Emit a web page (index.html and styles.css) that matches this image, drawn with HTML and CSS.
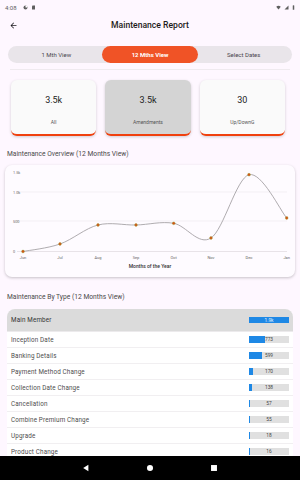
FILE: index.html
```html
<!DOCTYPE html>
<html>
<head>
<meta charset="utf-8">
<link rel="stylesheet" href="styles.css">
</head>
<body>
<div class="screen">
  <div class="status">
    <div class="status-left">
      <span class="time">4:08</span>
      <svg class="sicon" viewBox="0 0 10 10"><circle cx="5" cy="5" r="4" fill="#5f5f5f"/><path d="M5 1 A4 4 0 0 1 9 5 L5 5 Z" fill="#fff"/></svg>
      <svg class="sicon" viewBox="0 0 10 10"><path d="M3 1 H8 V9 H2 V2.5 Z" fill="#5f5f5f"/></svg>
    </div>
    <div class="status-right">
      <svg class="sicon" viewBox="0 0 10 10"><path d="M0.5 3.5 A7 7 0 0 1 9.5 3.5 L5 9 Z" fill="#5f5f5f"/></svg>
      <svg class="sicon" viewBox="0 0 10 10"><path d="M9 1 V9 H1 Z" fill="#5f5f5f"/></svg>
      <svg class="sicon bat" viewBox="0 0 6 10"><rect x="1.5" y="1" width="3" height="8.5" rx="0.5" fill="#5f5f5f"/><rect x="2.3" y="0.3" width="1.4" height="1" fill="#5f5f5f"/></svg>
    </div>
  </div>

  <div class="appbar">
    <svg class="back" viewBox="0 0 24 24"><path d="M20 11H7.83l5.59-5.59L12 4l-8 8 8 8 1.41-1.41L7.83 13H20v-2z" fill="#1d1b20"/></svg>
    <div class="title">Maintenance Report</div>
    <div></div>
  </div>

  <main class="content">
    <div class="tabs">
      <div class="tab">1 Mth View</div>
      <div class="tab active">12 Mths View</div>
      <div class="tab">Select Dates</div>
    </div>
    <div class="divider"></div>

    <div class="cards">
      <div class="card"><div class="val">3.5k</div><div class="lbl">All</div></div>
      <div class="card selected"><div class="val">3.5k</div><div class="lbl">Amendments</div></div>
      <div class="card"><div class="val">30</div><div class="lbl">Up/DownG</div></div>
    </div>

    <div class="section-title">Maintenance Overview (12 Months View)</div>
    <div class="chart-card">
      <svg class="chart" viewBox="0 0 290 112" width="290" height="112">
        <g class="grid">
          <line x1="12" y1="27" x2="282" y2="27"/>
          <line x1="12" y1="56" x2="282" y2="56"/>
        </g>
        <line x1="12" y1="86.5" x2="282" y2="86.5" class="base"/>
        <g class="ylab">
          <text x="8" y="8.5">1.5k</text>
          <text x="8" y="28.5">1.0k</text>
          <text x="8" y="57.5">500</text>
          <text x="8" y="88">0</text>
        </g>
        <path class="line" d="M18 86.5 C24.2 85.25 42.5 83.4 55 79 C67.5 74.6 80.3 63.2 93 60 C105.7 56.8 118.4 60.3 131 60 C143.6 59.7 156.2 56.1 168.7 58.3 C181.2 60.5 193.45 81.1 206 73 C218.55 64.9 231.4 13 244 9.7 C256.6 6.4 275.4 45.8 281.7 53"/>
        <g class="pts">
          <circle cx="18" cy="86.5" r="1.4"/>
          <circle cx="55" cy="79" r="1.4"/>
          <circle cx="93" cy="60" r="1.4"/>
          <circle cx="131" cy="60" r="1.4"/>
          <circle cx="168.7" cy="58.3" r="1.4"/>
          <circle cx="206" cy="73" r="1.4"/>
          <circle cx="244" cy="9.7" r="1.4"/>
          <circle cx="281.7" cy="53" r="1.4"/>
        </g>
        <g class="xlab">
          <text x="18" y="93.5">Jun</text>
          <text x="55" y="93.5">Jul</text>
          <text x="93" y="93.5">Aug</text>
          <text x="131" y="93.5">Sep</text>
          <text x="168.7" y="93.5">Oct</text>
          <text x="206" y="93.5">Nov</text>
          <text x="244" y="93.5">Dec</text>
          <text x="281.7" y="93.5">Jan</text>
        </g>
        <text class="xtitle" x="145" y="103">Months of the Year</text>
      </svg>
    </div>

    <div class="section-title second">Maintenance By Type (12 Months View)</div>
    <div class="table-card">
      <div class="row head">
        <span class="name">Main Member</span>
        <span class="bar"><span class="fill" style="width:100%"></span><span class="num light">1.9k</span></span>
      </div>
      <div class="row"><span class="name">Inception Date</span><span class="bar"><span class="fill" style="width:41%"></span><span class="num">773</span></span></div>
      <div class="row"><span class="name">Banking Details</span><span class="bar"><span class="fill" style="width:32%"></span><span class="num">599</span></span></div>
      <div class="row"><span class="name">Payment Method Change</span><span class="bar"><span class="fill" style="width:9%"></span><span class="num">170</span></span></div>
      <div class="row"><span class="name">Collection Date Change</span><span class="bar"><span class="fill" style="width:7%"></span><span class="num">138</span></span></div>
      <div class="row"><span class="name">Cancellation</span><span class="bar"><span class="fill" style="width:3%"></span><span class="num">57</span></span></div>
      <div class="row"><span class="name">Combine Premium Change</span><span class="bar"><span class="fill" style="width:3%"></span><span class="num">55</span></span></div>
      <div class="row"><span class="name">Upgrade</span><span class="bar"><span class="fill" style="width:1%"></span><span class="num">18</span></span></div>
      <div class="row"><span class="name">Product Change</span><span class="bar"><span class="fill" style="width:1%"></span><span class="num">16</span></span></div>
    </div>
  </main>

  <div class="navbar">
    <svg class="nav-ic" viewBox="0 0 10 10"><path d="M8 1 V9 L1.5 5 Z" fill="#fff"/></svg>
    <svg class="nav-ic" viewBox="0 0 10 10"><circle cx="5" cy="5" r="3.8" fill="#fff"/></svg>
    <svg class="nav-ic" viewBox="0 0 10 10"><rect x="1.3" y="1.3" width="7.4" height="7.4" fill="#fff"/></svg>
  </div>
</div>
</body>
</html>
```

FILE: styles.css
```css
* { box-sizing: border-box; }
html, body { margin: 0; padding: 0; }
body {
  width: 300px;
  height: 480px;
  overflow: hidden;
  background: #fef7ff;
  font-family: Roboto, "Noto Sans", sans-serif;
  color: #1d1b20;
}
.screen {
  width: 300px;
  height: 480px;
  display: flex;
  flex-direction: column;
}
.status {
  height: 14px;
  flex: none;
  display: flex;
  justify-content: space-between;
  align-items: center;
  padding: 0 5px 0 5px;
}
.status-left, .status-right { display: flex; align-items: center; gap: 3px; }
.time { font-size: 6px; color: #5f5f5f; margin-right: 3px; }
.sicon { width: 5px; height: 5px; display: block; }
.sicon.bat { width: 3px; height: 5px; }

.appbar {
  height: 22px;
  flex: none;
  display: grid;
  grid-template-columns: 28px 1fr 28px;
  align-items: center;
}
.back { width: 9px; height: 9px; margin-left: 9px; display: block; }
.title { text-align: center; font-size: 8.6px; font-weight: 500; color: #1d1b20; }

.content {
  flex: 1;
  overflow: hidden;
  display: flex;
  flex-direction: column;
}
.tabs {
  margin: 10px 8px 0;
  height: 17px;
  background: #e9e5ea;
  border-radius: 9px;
  display: flex;
  flex: none;
}
.tab {
  flex: 1;
  display: flex;
  align-items: center;
  justify-content: center;
  font-size: 6px;
  color: #49454f;
}
.tab.active {
  background: #f05326;
  color: #fff;
  font-weight: 700;
  border-radius: 9px;
  margin: 0 -3px 0 -3px;
  position: relative;
}
.divider {
  height: 1px;
  background: #efeaef;
  margin: 6px 10px 0;
  flex: none;
}
.cards {
  display: grid;
  grid-template-columns: repeat(3, 1fr);
  gap: 9px;
  margin: 10px 15px 0 11px;
  flex: none;
}
.card {
  height: 56px;
  background: #fafafa;
  border-radius: 6px;
  border-bottom: 2.5px solid #f0400e;
  box-shadow: 0 1px 3px rgba(0,0,0,0.18);
  display: flex;
  flex-direction: column;
  align-items: center;
}
.card.selected { background: #d4d4d4; }
.val { font-size: 9px; margin-top: 15px; color: #222; }
.lbl { font-size: 5px; margin-top: 14px; color: #555; }

.section-title {
  font-size: 6.7px;
  color: #4a4a4a;
  margin: 13px 0 0 7px;
  height: 10px;
  line-height: 10px;
  flex: none;
}
.section-title.second { margin-top: 15px; }

.chart-card {
  margin: 6px 5px 0;
  height: 112px;
  background: #fefbff;
  border-radius: 7px;
  box-shadow: 0 1px 3px rgba(0,0,0,0.22);
  flex: none;
  overflow: hidden;
}
.chart { display: block; }
.grid line { stroke: #ece8ec; stroke-width: 0.6; }
.base { stroke: #d8d4d8; stroke-width: 0.6; }
.ylab text { font-size: 3.8px; fill: #666; font-family: Roboto, sans-serif; }
.xlab text { font-size: 4px; fill: #666; text-anchor: middle; font-family: Roboto, sans-serif; }
.xtitle { font-size: 5px; fill: #333; text-anchor: middle; font-family: Roboto, sans-serif; font-weight: 500; }
.line { fill: none; stroke: #a6a3a6; stroke-width: 0.9; }
.pts circle { fill: #d84c15; stroke: #8db33a; stroke-width: 0.4; }

.table-card {
  margin: 7px 7px 0;
  background: #fff;
  border-radius: 8px 8px 0 0;
  flex: none;
}
.row {
  height: 16px;
  display: flex;
  align-items: center;
  justify-content: space-between;
  padding: 0 4px 0 4px;
  border-bottom: 1px solid #f1eff1;
}
.row.head {
  height: 23px;
  background: #dbdbdb;
  border-radius: 8px 8px 0 0;
  border-bottom: 1px solid #eceaec;
}
.name { font-size: 6.3px; color: #4e4e4e; letter-spacing: 0.15px; }
.row.head .name { color: #333; }
.bar {
  position: relative;
  width: 40px;
  height: 7px;
  background: #e0e0e0;
  display: block;
}
.row.head .bar { height: 6.5px; }
.fill {
  position: absolute;
  left: 0; top: 0; bottom: 0;
  background: #1e88e5;
}
.num {
  position: absolute;
  left: 0; right: 0; top: 0; bottom: 0;
  font-size: 4.8px;
  line-height: 7px;
  text-align: center;
  color: #444;
}
.num.light { color: #e8f2ff; }

.navbar {
  height: 24px;
  flex: none;
  background: #000;
  display: flex;
  justify-content: center;
  align-items: center;
  gap: 56px;
}
.nav-ic { width: 8px; height: 8px; display: block; }
```
